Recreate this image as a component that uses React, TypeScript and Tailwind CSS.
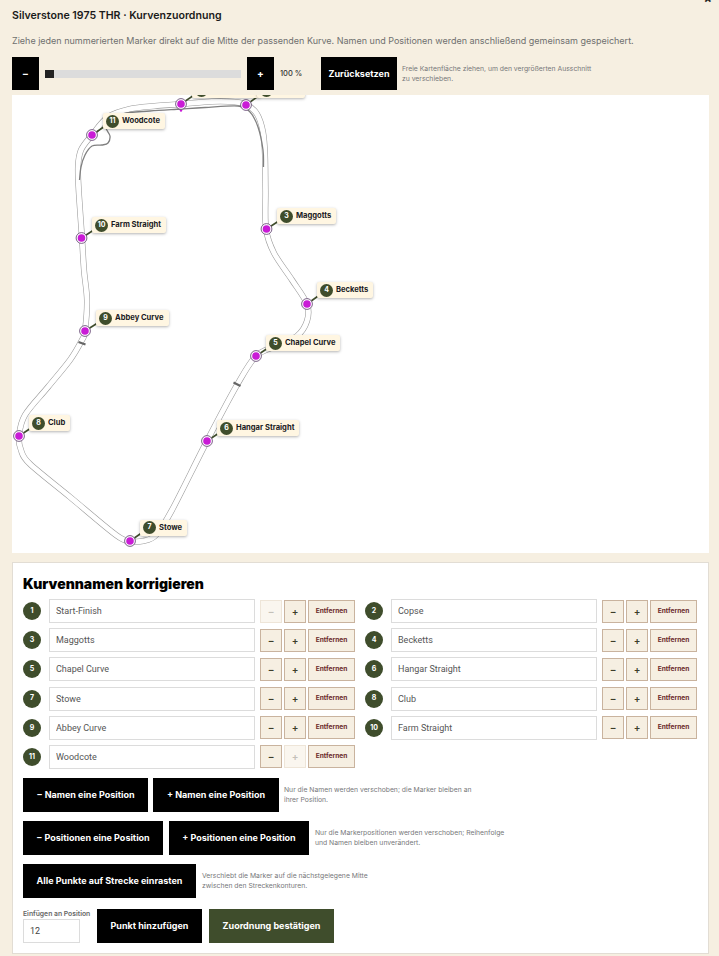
import React from "react";

type P = [number, number];

function smooth(pts: P[], closed = false): string {
  const n = pts.length;
  const at = (i: number): P => (closed ? pts[(i + n) % n] : pts[Math.max(0, Math.min(n - 1, i))]);
  let d = `M${pts[0][0]} ${pts[0][1]}`;
  const end = closed ? n : n - 1;
  for (let i = 0; i < end; i++) {
    const p0 = at(i - 1), p1 = at(i), p2 = at(i + 1), p3 = at(i + 2);
    const c1: P = [p1[0] + (p2[0] - p0[0]) / 6, p1[1] + (p2[1] - p0[1]) / 6];
    const c2: P = [p2[0] - (p3[0] - p1[0]) / 6, p2[1] - (p3[1] - p1[1]) / 6];
    d += ` C${c1[0].toFixed(1)} ${c1[1].toFixed(1)} ${c2[0].toFixed(1)} ${c2[1].toFixed(1)} ${p2[0]} ${p2[1]}`;
  }
  return closed ? d + "Z" : d;
}

const track: P[] = [
  [181, 9], [212, 6.5], [235, 7], [247, 10], [257, 19], [263, 37], [265, 60], [265.5, 95], [266, 134],
  [274, 158], [292, 185], [307, 209], [307, 226], [297, 241], [276, 251], [256, 261], [237, 290], [207, 346],
  [172, 415], [156, 440], [143, 446], [130, 446], [116, 440], [70, 402], [30, 369], [21, 355], [19, 341], [25, 320],
  [48, 292], [70, 265], [82, 245], [85, 236], [87, 205], [84, 175], [82, 143], [79, 100], [78, 72], [81, 55], [92, 40],
  [108, 22], [130, 14], [155, 11],
];

const pit: P[] = [
  [263.5, 72], [263, 55], [258, 32], [250, 17], [238, 11], [205, 12.5], [181, 14], [150, 16], [122, 19], [106, 30],
  [110, 41], [108, 48], [102, 50], [92, 51], [85, 60], [81, 72], [79.5, 85],
];

const markers: { n: number; name: string; x: number; y: number; left: number; top: number }[] = [
  { n: 1, name: "Start-Finish", x: 181, y: 9, left: 180, top: -13 },
  { n: 2, name: "Copse", x: 246, y: 10, left: 245, top: -13 },
  { n: 3, name: "Maggotts", x: 266.5, y: 134, left: 265, top: 113 },
  { n: 4, name: "Becketts", x: 307, y: 209, left: 305, top: 187 },
  { n: 5, name: "Chapel Curve", x: 256, y: 261, left: 254, top: 240 },
  { n: 6, name: "Hangar Straight", x: 207, y: 346, left: 205, top: 325 },
  { n: 7, name: "Stowe", x: 130, y: 446, left: 128, top: 424.5 },
  { n: 8, name: "Club", x: 19, y: 341, left: 17, top: 320 },
  { n: 9, name: "Abbey Curve", x: 85, y: 236, left: 84, top: 215 },
  { n: 10, name: "Farm Straight", x: 81.5, y: 143, left: 80, top: 122 },
  { n: 11, name: "Woodcote", x: 92, y: 40, left: 91, top: 18 },
];

const rows: { n: number; name: string; noMinus?: boolean; noPlus?: boolean }[] = [
  { n: 1, name: "Start-Finish", noMinus: true },
  { n: 2, name: "Copse" },
  { n: 3, name: "Maggotts" },
  { n: 4, name: "Becketts" },
  { n: 5, name: "Chapel Curve" },
  { n: 6, name: "Hangar Straight" },
  { n: 7, name: "Stowe" },
  { n: 8, name: "Club" },
  { n: 9, name: "Abbey Curve" },
  { n: 10, name: "Farm Straight" },
  { n: 11, name: "Woodcote", noPlus: true },
];

function Step({ label, disabled }: { label: string; disabled?: boolean }) {
  return (
    <button
      className={
        "w-[22px] h-[23px] border flex items-center justify-center text-[10px] font-semibold " +
        (disabled ? "border-[#eee5d8] bg-[#faf6ef] text-[#c4c0b8]" : "border-[#c9b39e] bg-[#f6efe2] text-[#3d3d2a]")
      }
    >
      {label}
    </button>
  );
}

function Hint({ children, className }: { children: React.ReactNode; className: string }) {
  return <p className={"text-[6.8px] leading-[10px] text-[#77787a] " + className}>{children}</p>;
}

function Dark({ children, className }: { children: React.ReactNode; className: string }) {
  return (
    <button className={"h-[34px] bg-black text-white text-[9px] font-bold flex items-center justify-center " + className}>
      {children}
    </button>
  );
}

export default function App() {
  return (
    <div className="relative w-[719px] h-[956px] overflow-hidden bg-[#f6efe1] pl-3 pr-[10px] font-['Inter',sans-serif] text-[#111]">
      <span className="absolute right-[7px] top-[-7px] text-[12px] font-bold leading-[12px] text-[#222]">×</span>
      <h1 className="pt-[9px] text-[10.6px] leading-[13px] font-semibold text-[#1a1a1a]">Silverstone 1975 THR · Kurvenzuordnung</h1>
      <p className="mt-[13px] text-[9px] leading-[12px] text-[#6f6f6f]">
        Ziehe jeden nummerierten Marker direkt auf die Mitte der passenden Kurve. Namen und Positionen werden anschließend gemeinsam gespeichert.
      </p>
      <div className="mt-[10px] flex h-[33px] items-center">
        <button className="h-[33px] w-[27px] bg-black text-[10px] font-bold text-white">−</button>
        <div className="ml-[6px] h-[8px] w-[196px] bg-[#dcdcdc]">
          <div className="h-full w-[9px] bg-[#222]" />
        </div>
        <button className="ml-[6px] h-[33px] w-[27px] bg-black text-[10px] font-bold text-white">+</button>
        <span className="ml-[6px] w-[41px] text-[7.5px] font-medium text-[#333]">100 %</span>
        <button className="h-[33px] w-[76px] bg-black text-[9px] font-bold text-white">Zurücksetzen</button>
        <Hint className="ml-[5px] w-[192px] leading-[10.5px]">
          Freie Kartenfläche ziehen, um den vergrößerten Ausschnitt zu verschieben.
        </Hint>
      </div>

      <div className="relative mt-[5px] h-[458px] overflow-hidden bg-white">
        <svg className="absolute left-0 top-0" width="697" height="458" viewBox="12 0 697 458">
          <path d={smooth(track, true)} fill="none" stroke="#999999" strokeWidth="6" />
          <path d={smooth(track, true)} fill="none" stroke="#ffffff" strokeWidth="4.9" />
          <path d={smooth(pit)} fill="none" stroke="#808080" strokeWidth="1.3" />
          <path d="M78.5 247 L85.5 249.5 M233.5 287.5 L240.5 291" stroke="#666" strokeWidth="2.2" fill="none" />
          {markers.map((m) => (
            <line key={m.n} x1={m.x} y1={m.y} x2={m.left + 21.5} y2={m.top + 8} stroke="#3f4d2c" strokeWidth="1.6" />
          ))}
          <circle cx="181" cy="15.5" r="1.2" fill="#c91bd6" />
          {markers.map((m) => (
            <g key={m.n}>
              <circle cx={m.x} cy={m.y} r="5.4" fill="#fff" stroke="#5b3a6b" strokeWidth="0.8" />
              <circle cx={m.x} cy={m.y} r="3.8" fill="#c91bd6" />
            </g>
          ))}
        </svg>
        {markers.map((m) => (
          <div
            key={m.n}
            className="absolute flex h-[16px] items-center gap-[3px] rounded-[2px] bg-[#fff6e2] pl-[3px] pr-[5px] text-[7.6px] font-bold whitespace-nowrap text-[#1a1a22] shadow-[0_1px_3px_rgba(0,0,0,0.3)]"
            style={{ left: m.left, top: m.top }}
          >
            <span className="flex h-[13px] w-[13px] items-center justify-center rounded-full bg-[#3f4d2c] text-[7px] font-bold text-white">
              {m.n}
            </span>
            {m.name}
          </div>
        ))}
      </div>

      <section className="mt-[9px] h-[392px] border border-[#e2ddd4] bg-white px-[10px] pt-[12px]">
        <h2 className="text-[14px] leading-[18px] font-black text-black">Kurvennamen korrigieren</h2>
        <div className="mt-[6px] grid w-[674px] grid-cols-2 gap-x-[10px] gap-y-[5.2px]">
          {rows.map((r) => (
            <div key={r.n} className="flex h-[24px] items-center">
              <span className="flex h-[18px] w-[18px] items-center justify-center rounded-full bg-[#3f4d2c] text-[7px] font-bold text-white">
                {r.n}
              </span>
              <input
                readOnly
                value={r.name}
                className="ml-[8px] h-[24px] w-[206px] border border-[#dcdcdc] bg-white px-[6px] font-['Roboto',sans-serif] text-[9px] text-[#555] outline-none"
              />
              <div className="ml-[5px] flex gap-[2px]">
                <Step label="−" disabled={r.noMinus} />
                <Step label="+" disabled={r.noPlus} />
                <button className="h-[23px] w-[47px] border border-[#c9b39e] bg-[#f6efe2] pt-[1px] text-[6.6px] font-bold text-[#6b2a2a]">
                  Entfernen
                </button>
              </div>
            </div>
          ))}
        </div>

        <div className="mt-[9px] flex items-center gap-[5px]">
          <Dark className="w-[125px]">− Namen eine Position</Dark>
          <Dark className="w-[126px]">+ Namen eine Position</Dark>
          <Hint className="w-[195px]">Nur die Namen werden verschoben; die Marker bleiben an ihrer Position.</Hint>
        </div>
        <div className="mt-[9px] flex items-center gap-[6px]">
          <Dark className="w-[140px]">− Positionen eine Position</Dark>
          <Dark className="w-[140px]">+ Positionen eine Position</Dark>
          <Hint className="w-[200px]">Nur die Markerpositionen werden verschoben; Reihenfolge und Namen bleiben unverändert.</Hint>
        </div>
        <div className="mt-[9px] flex items-center gap-[6px]">
          <Dark className="w-[173px]">Alle Punkte auf Strecke einrasten</Dark>
          <Hint className="w-[175px]">Verschiebt die Marker auf die nächstgelegene Mitte zwischen den Streckenkonturen.</Hint>
        </div>
        <div className="mt-[11px] flex items-end">
          <label className="flex w-[74px] flex-col">
            <span className="text-[6.8px] leading-[10px] font-semibold whitespace-nowrap text-[#666]">Einfügen an Position</span>
            <input
              readOnly
              value="12"
              className="h-[24px] w-[57px] border border-[#dcdcdc] bg-white px-[6px] font-['Roboto',sans-serif] text-[9px] text-[#444] outline-none"
            />
          </label>
          <Dark className="w-[105px]">Punkt hinzufügen</Dark>
          <Dark className="ml-[7px] w-[125px] !bg-[#3f4d2c]">Zuordnung bestätigen</Dark>
        </div>
      </section>
    </div>
  );
}
